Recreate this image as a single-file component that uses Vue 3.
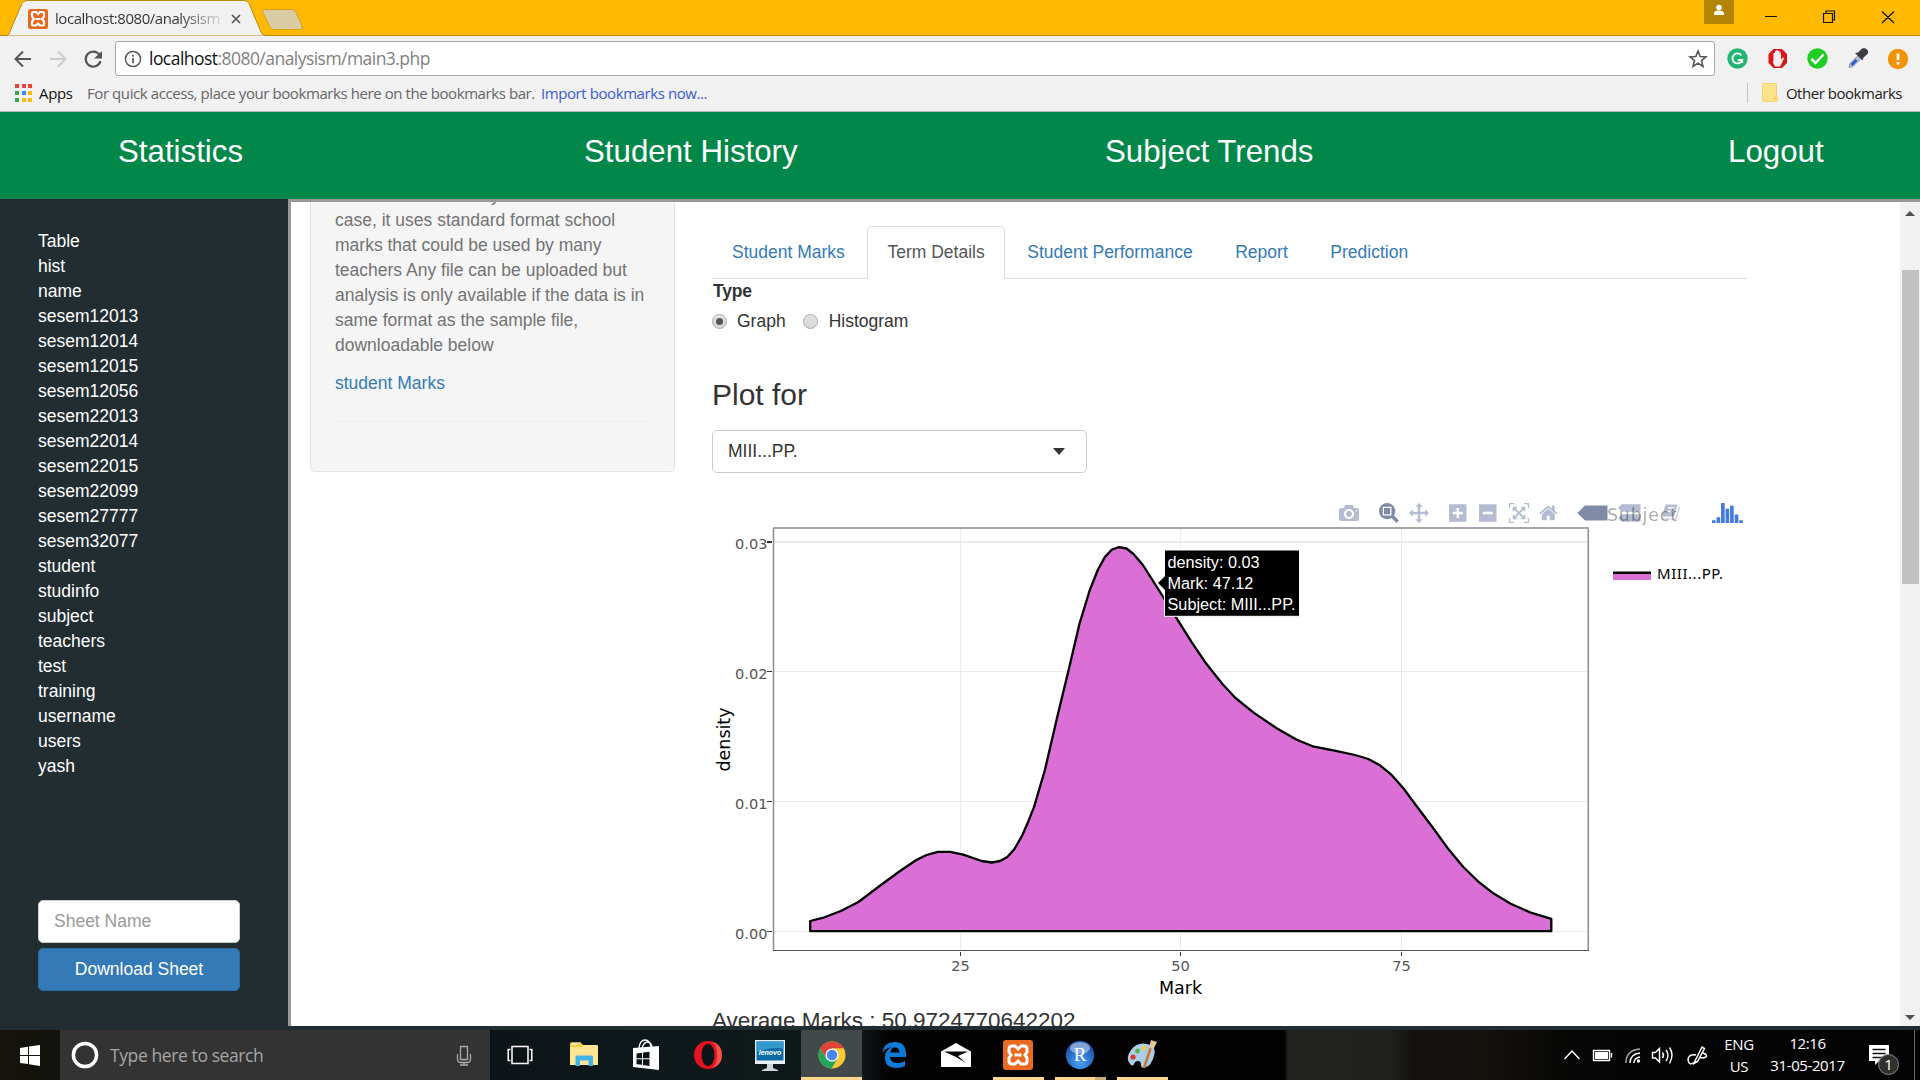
<script setup>
const tables = [
  'Table', 'hist', 'name', 'sesem12013', 'sesem12014', 'sesem12015', 'sesem12056',
  'sesem22013', 'sesem22014', 'sesem22015', 'sesem22099', 'sesem27777', 'sesem32077',
  'student', 'studinfo', 'subject', 'teachers', 'test', 'training', 'username', 'users', 'yash'
]
const tabs = ['Student Marks', 'Term Details', 'Student Performance', 'Report', 'Prediction']
const activeTab = 'Term Details'
const helpLines = [
  'case, it uses standard format school', 'marks that could be used by many',
  'teachers Any file can be uploaded but', 'analysis is only available if the data is in',
  'same format as the sample file,', 'downloadable below'
]
const appDots = ['#ea4335', '#ea4335', '#ea4335', '#34a853', '#4285f4', '#fbbc05', '#34a853', '#fbbc05', '#fbbc05']

const curve = [
  [810.2, 921], [824.5, 917.3], [840.8, 911], [858.4, 902], [879.6, 886], [900, 871], [916.3, 860],
  [926.5, 855], [938, 851.8], [950, 851.8], [963.3, 854.7], [981.6, 861], [991.8, 862.5], [1000, 861],
  [1007.3, 857], [1014.3, 849.3], [1022.4, 835], [1028.6, 820.7], [1033.9, 807.3], [1044.9, 770],
  [1057, 718], [1069.4, 666.7], [1079.6, 623.3], [1089.8, 590], [1098, 569.5], [1105, 556.9],
  [1112, 549.5], [1119, 547.2], [1126.5, 548.5], [1133.5, 554], [1142.9, 565], [1155, 584],
  [1164.5, 599], [1176.7, 618.3], [1191.8, 642.3], [1206, 663.3], [1222.4, 684], [1235.5, 698],
  [1253.3, 712.4], [1276.7, 728.3], [1296.7, 739.7], [1312.7, 746.3], [1333.3, 750.3], [1355, 755],
  [1368.3, 759], [1380, 765.3], [1391, 774.3], [1404, 789], [1415, 804], [1433.3, 828.3],
  [1447.3, 847.7], [1463.3, 867], [1478, 881.3], [1493.3, 893.3], [1510.7, 903.7], [1530, 912.3],
  [1551.3, 918.9]
]
const area = 'M' + curve.map(p => p.join(' ')).join('L') + 'L1551.3 931.2L810.2 931.2Z'
const yTicks = [{ v: '0.03', y: 542, w: 2 }, { v: '0.02', y: 671.5, w: 1 }, { v: '0.01', y: 801.5, w: 1 }, { v: '0.00', y: 931.5, w: 1 }]
const xTicks = [{ v: '25', x: 960.5 }, { v: '50', x: 1180.5 }, { v: '75', x: 1401.5 }]

const modebar = [
  { x: 1339, on: false, d: 'm500 450c-83 0-150-67-150-150 0-83 67-150 150-150 83 0 150 67 150 150 0 83-67 150-150 150z m400 150h-120c-16 0-34 13-39 29l-31 93c-6 15-23 28-40 28h-340c-16 0-34-13-39-28l-31-94c-6-15-23-28-40-28h-120c-55 0-100-45-100-100v-450c0-55 45-100 100-100h800c55 0 100 45 100 100v450c0 55-45 100-100 100z m-400-550c-138 0-250 112-250 250 0 138 112 250 250 250 138 0 250-112 250-250 0-138-112-250-250-250z m365 380c-19 0-35 16-35 35 0 19 16 35 35 35 19 0 35-16 35-35 0-19-16-35-35-35z' },
  { x: 1379, on: true, d: 'm1000-25l-250 251c40 63 63 138 63 218 0 224-182 406-407 406-224 0-406-182-406-406s183-406 407-406c80 0 155 22 218 62l250-250 125 125z m-812 250l0 438 437 0 0-438-437 0z m62 375l313 0 0-312-313 0 0 312z' },
  { x: 1409, on: false, d: 'm1000 350l-187 188 0-125-250 0 0 250 125 0-188 187-187-187 125 0 0-250-250 0 0 125-188-188 186-187 0 125 252 0 0-250-125 0 187-188 188 188-125 0 0 250 250 0 0-126 187 188z' },
  { x: 1449, on: false, d: 'm1 787l0-875 875 0 0 875-875 0z m687-500l-187 0 0-187-125 0 0 187-188 0 0 125 188 0 0 187 125 0 0-187 187 0 0-125z' },
  { x: 1479, on: false, d: 'm0 788l0-876 875 0 0 876-875 0z m688-500l-500 0 0 125 500 0 0-125z' },
  { x: 1509, on: false, d: 'm250 850l-187 0-63 0 0-62 0-188 63 0 0 188 187 0 0 62z m688 0l-188 0 0-62 188 0 0-188 62 0 0 188 0 62-62 0z m-875-938l0 188-63 0 0-188 0-62 63 0 187 0 0 62-187 0z m875 188l0-188-188 0 0-62 188 0 62 0 0 62 0 188-62 0z m-125 188l-1 0-93-94-156 156 156 156 92-93 2 0 0 250-250 0 0-2 93-92-156-156-156 156 94 92 0 2-250 0 0-250 0 0 93 93 157-156-157-156-93 94 0 0 0-250 250 0 0 0-94 93 156 157 156-157-93-93 0 0 250 0 0 250z' },
  { x: 1539, on: false, d: 'm786 296v-267q0-15-11-26t-25-10h-214v214h-143v-214h-214q-15 0-25 10t-11 26v267q0 1 0 2t0 2l321 264 321-264q1-1 1-4z m124 39l-34-41q-5-5-12-6h-2q-7 0-12 3l-386 322-386-322q-7-4-13-4-7 2-12 7l-35 41q-4 5-3 13t6 12l401 334q18 15 42 15t43-15l136-114v109q0 8 5 13t13 5h107q8 0 13-5t5-13v-227l122-102q5-5 6-12t-4-13z' },
  { x: 1577.5, on: true, d: 'm375 725l0 0-375-375 375-374 0-1 1125 0 0 750-1125 0z' },
  { x: 1618, on: false, d: 'm187 786l0 2-187-188 188-187 0 0 937 0 0 373-938 0z m0-499l0 1-187-188 188-188 0 0 937 0 0 376-938-1z' }
]
const logo = 'm0-10h182v-140h-182v140z m228 146h183v-286h-183v286z m225 714h182v-1000h-182v1000z m225-285h182v-715h-182v715z m225 142h183v-857h-183v857z m231-428h182v-429h-182v429z m225-291h183v-138h-183v138z'
</script>

<template>
  <div class="screen">
    <header class="titlebar">
      <svg class="tabshape" width="320" height="36" viewBox="0 0 320 36">
        <path d="M0 35.5H6C9 35.5 9.500 33 10.500 30L22 3.500Q23.500 .5 27 .5H244Q247.500 .5 249 3.500L261 32Q262.500 35.500 266 35.500H320" fill="#f1f1f1" stroke="#bd8a10" />
        <path d="M264.500 9.500H292Q295 9.500 296 12L302.500 27Q303 29.500 300 29.500H274Q271 29.500 270 27L262.500 12Q262 9.500 264.500 9.500Z" fill="#dacba4" stroke="#d9a013" />
        <rect x="28" y="9" width="20" height="20" rx="2.500" fill="#e8691d" />
        <path d="M32 13.500q0-1.500 1.500-1.500h2.500l2 2 2-2h2.500q1.500 0 1.500 1.500v3l-2 2.500 2 2.500v2.500q0 1.500-1.500 1.500h-2.500l-2-2-2 2h-2.500q-1.500 0-1.500-1.500v-2.500l2-2.500-2-2.500z" fill="none" stroke="#fff" stroke-width="2.200" />
        <path d="M35.500 19h5" stroke="#fff" stroke-width="2" />
        <path d="M232 15l8 8m0-8l-8 8" stroke="#555" stroke-width="1.700" />
      </svg>
      <span class="tabtitle">localhost:8080/analysism</span>
      <div class="winctl">
        <span class="user"><svg width="30" height="24" viewBox="0 0 30 24"><circle cx="15" cy="7.500" r="2.800" fill="#fff" /><path d="M10 15v-1.500q0-3 5-3t5 3V15z" fill="#fff" /></svg></span>
        <svg width="176" height="35" viewBox="1744 0 176 35" fill="none" stroke="#111" stroke-width="1.200">
          <path d="M1765 16.500h12M1823.500 13.500h9v9h-9zM1826 13v-2h8.500v9h-2M1882 11.500l12 11.500m0-11.500l-12 11.500" />
        </svg>
      </div>
    </header>

    <div class="toolbar">
      <svg width="115" height="46" viewBox="0 36 115 46" fill="none" stroke-width="2">
        <path d="M31 59H16m7-7.500l-7.500 7.500 7.500 7.500" stroke="#555" />
        <path d="M50 59h15m-7-7.500l7.500 7.500-7.500 7.500" stroke="#ccc" />
        <path d="M99.500 55A7.500 7.500 0 1 0 100.500 61" stroke="#555" stroke-width="2.200" />
        <path d="M102 51v7.500h-8z" fill="#555" />
      </svg>
      <div class="omnibox">
        <svg width="18" height="18" viewBox="0 0 18 18"><circle cx="9" cy="9" r="7.600" fill="none" stroke="#5a5a5a" stroke-width="1.500" /><path d="M9 8v5.200M9 4.700v2" stroke="#5a5a5a" stroke-width="1.700" /></svg>
        <span class="url"><b>localhost</b>:8080/analysism/main3.php</span>
        <svg class="star" width="20" height="20" viewBox="0 0 20 20"><path d="M10 2l2.200 5.500 5.800.4-4.500 3.700 1.500 5.800-5-3.200-5 3.200 1.500-5.800L2 7.900l5.800-.4z" fill="none" stroke="#555" stroke-width="1.600" /></svg>
      </div>
      <svg width="205" height="46" viewBox="1715 36 205 46">
        <circle cx="1737.500" cy="58.500" r="10.200" fill="#23b574" />
        <path d="M1741.500 55.500a5 5 0 1 0 .7 4.500h-4.500m4.500 0v3" fill="none" stroke="#fff" stroke-width="1.800" />
        <path d="M1773.500 49h8.500l5 5v9l-5 5h-8.500l-5-5v-9z" fill="#dc1518" />
        <path d="M1773.500 59v-6h1.500v-2h1.500v-1h1.500v1h1.500v1.500h1.500v7l1.500-2 1.500.5-2.500 6-1.500 2.500h-5l-2-4z" fill="#f4eeee" />
        <circle cx="1817.500" cy="58.500" r="10.200" fill="#1fce25" />
        <path d="M1811.500 59l4 4 8-8.500" fill="none" stroke="#fff" stroke-width="2.500" />
        <path d="M1849 67.500l1-4 8-8 3 3-8 8z" fill="#a7c0e8" stroke="#999" /><path d="M1851.500 65l5-5" stroke="#2d55cf" stroke-width="2.500" />
        <path d="M1855 53l3-.5 4-4q3-1 5 1t.5 4.500l-4 3.500-1 3z" fill="#3c3c40" />
        <circle cx="1898" cy="59" r="10.200" fill="#f29305" />
        <path d="M1898 53.500v6.500m0 2v2.500" stroke="#fff" stroke-width="2.700" />
      </svg>
    </div>

    <div class="bookmarks">
      <div class="dots"><i v-for="(c, i) in appDots" :key="i" :style="{ background: c }"></i></div>
      <span class="apps">Apps</span>
      <span class="hint">For quick access, place your bookmarks here on the bookmarks bar.</span>
      <span class="import">Import bookmarks now...</span>
      <div class="other">
        <svg width="16" height="19" viewBox="0 0 16 19"><path d="M1.500.5h12q1 0 1 1V13l1 1v3.500l-2 1h-12q-1 0-1-1v-16q0-1 1-1z" fill="#ffe38c" stroke="#f5d06c" /><path d="M12.500 17v-3h2.500" fill="none" stroke="#efc64f" /></svg>
        <span>Other bookmarks</span>
      </div>
    </div>

    <nav class="topnav">
      <a>Statistics</a><a>Student History</a><a>Subject Trends</a><a>Logout</a>
    </nav>

    <div class="body">
      <aside class="sidebar">
        <div v-for="t in tables" :key="t" class="row">{{ t }}</div>
        <div class="field">Sheet Name</div>
        <div class="btn">Download Sheet</div>
      </aside>
      <main class="frame">
        <section class="well">
          <div class="cut">y</div>
          <div v-for="l in helpLines" :key="l">{{ l }}</div>
          <a class="dl">student Marks</a>
          <hr />
        </section>
        <section class="content">
          <div class="tabs">
            <a v-for="t in tabs" :key="t" :class="{ active: t === activeTab }">{{ t }}</a>
          </div>
          <div class="type">Type</div>
          <div class="radios">
            <i class="radio on"></i><span>Graph</span><i class="radio second"></i><span>Histogram</span>
          </div>
          <h3>Plot for</h3>
          <div class="select"><span>MIII...PP.</span><i></i></div>
          <svg class="plot" width="1080" height="532" viewBox="712 473 1080 532">
            <g stroke="#ebebeb">
              <path v-for="t in yTicks" :key="t.v" :d="`M774 ${t.y}H1588`" :stroke-width="t.w" />
              <path v-for="t in xTicks" :key="t.v" :d="`M${t.x} 528V950`" />
            </g>
            <path :d="area" fill="#da70d6" stroke="#000" stroke-width="2.300" stroke-linejoin="round" />
            <path d="M773.500 528V950.500M1588.300 528V950.500" stroke="#8c8c8c" stroke-width="1.500" />
            <path d="M773 528H1589" stroke="#a6a6a6" stroke-width="2" />
            <path d="M773 950.500H1589" stroke="#555" />
            <g stroke="#333">
              <path v-for="t in yTicks" :key="t.v" :d="`M767 ${t.y}H772`" :stroke-width="t.w" />
              <path v-for="t in xTicks" :key="t.v" :d="`M${t.x} 952V956`" />
            </g>
            <g class="ticks">
              <text v-for="t in yTicks" :key="t.v" x="767.500" :y="t.y + 7" text-anchor="end">{{ t.v }}</text>
              <text v-for="t in xTicks" :key="t.v" :x="t.x" y="971" text-anchor="middle">{{ t.v }}</text>
            </g>
            <g class="axis">
              <text x="1180.500" y="993.500" text-anchor="middle">Mark</text>
              <text transform="translate(730 739.500) rotate(-90)" text-anchor="middle">density</text>
            </g>
            <g>
              <path v-for="b in modebar" :key="b.x" :d="b.d" :transform="`matrix(.02 0 0 -.02 ${b.x} 520)`" :fill="b.on ? '#808ba5' : '#b4bcd1'" />
              <path d="M1665.500 504.500h12l-3.500 12h-12z" fill="#b4bcd1" />
              <path d="M1668 508h6.500M1667 511.500h6.500" stroke="#fff" stroke-width="1.600" />
              <path d="M1679.500 507l-3.500 12h-14" fill="none" stroke="#c3cadb" stroke-width="1.200" />
              <path :d="logo" transform="matrix(.02 0 0 -.02 1712 520)" fill="#447adb" />
            </g>
            <text class="ltitle" x="1607" y="521" textLength="70">Subject</text>
            <rect x="1613" y="573" width="38" height="7" fill="#da70d6" />
            <rect x="1613" y="571.500" width="38" height="2.500" fill="#000" />
            <text class="litem" x="1657" y="578.700" textLength="66">MIII...PP.</text>
            <path d="M1157.500 583l7-7V550h135v66.300h-135V590z" fill="#000" stroke="#fff" />
            <g class="tip">
              <text x="1167.500" y="567.700">density: 0.03</text>
              <text x="1167.500" y="589">Mark: 47.12</text>
              <text x="1167.500" y="610">Subject: MIII...PP.</text>
            </g>
          </svg>
          <div class="avg">Average Marks : 50.9724770642202</div>
        </section>
        <div class="scroll">
          <i class="up"></i><div class="thumb"></div><i class="down"></i>
        </div>
      </main>
    </div>

    <footer class="taskbar">
      <div class="start"><svg width="20" height="21" viewBox="0 0 20 21" fill="#fff"><path d="M0 3l8-1.200V9.900H0zM9 1.600L20 0v9.900H9zM0 10.900h8v8L0 17.900zM9 10.900h11V21L9 19.200z" /></svg></div>
      <div class="search">
        <svg width="28" height="28" viewBox="0 0 28 28"><circle cx="14" cy="14" r="11.600" fill="none" stroke="#fff" stroke-width="3.500" /></svg>
        <span>Type here to search</span>
        <svg class="mic" width="16" height="21" viewBox="0 0 16 21" fill="none" stroke="#aaa" stroke-width="1.300"><path d="M4.500 1.500h7v13h-7zM1.500 9v5q0 3.500 3.500 3.500h6q3.500 0 3.500-3.500V9M8 17.500V20M4 20h8" /></svg>
      </div>
      <div class="slot first"><svg width="26" height="20" viewBox="0 0 26 20" fill="none" stroke="#fff" stroke-width="1.500"><path d="M5 1.500h16v17H5zM3.500 4.500H1.200v11h2.300M22.500 4.500h2.300v11h-2.300" /></svg></div>
      <div class="slot"><svg width="30" height="26" viewBox="0 0 30 26"><path d="M1 2q0-1.500 1.500-1.500h9L14 3H28q1 0 1 1v19H1z" fill="#ffe596" /><path d="M1 2q0-1.500 1.500-1.500h9L14 5H1z" fill="#ffcb3d" /><path d="M3 2h6" stroke="#fff" stroke-width="1.500" /><path d="M6.500 24V15q0-1.500 1.500-1.500h14.500q1.500 0 1.500 1.500v9h-4.500v-5.500h-8.500V24z" fill="#3fb4e6" /></svg></div>
      <div class="slot"><svg width="28" height="32" viewBox="0 0 28 32"><path d="M7 9Q8 1 13 1t6 7M10 9Q12 3 15.500 3T20 8" fill="none" stroke="#fff" stroke-width="1.300" /><path d="M1 9l26-2v24l-26-3z" fill="#fff" /><path d="M4.500 14.500l5.500-.8v5.500H4.500zM11 13.500l6.500-.8v6.500H11zM4.500 20.300H10v5.500l-5.500-.6zM11 20.300h6.500V27L11 26z" fill="#0c1417" /></svg></div>
      <div class="slot"><svg width="30" height="30" viewBox="0 0 30 30"><ellipse cx="15" cy="15" rx="14" ry="14" fill="#e5131f" /><path d="M19 1.600Q29 5 29 15T19 28.400Q24 24 24 15T19 1.600z" fill="#f6504f" /><ellipse cx="15" cy="15" rx="6.500" ry="11.300" fill="#0c1417" /></svg></div>
      <div class="slot"><svg width="32" height="32" viewBox="0 0 32 32"><path d="M1 1h30v24H1z" fill="#e8edf2" /><path d="M2.500 2.500h27v19h-27z" fill="#0d6ba8" /><path d="M2.500 2.500h27v7q-13-2-27 4z" fill="#3399cc" /><path d="M13 25h6v4l5 2v1H8v-1l5-2z" fill="#cdd3d8" /><text x="16" y="15.500" text-anchor="middle" class="lenovo">lenovo</text></svg></div>
      <div class="slot chrome"><svg width="28" height="30" viewBox="0 0 28 28"><circle cx="14" cy="14" r="13.500" fill="#fcc934" /><path d="M2.300 7.200A13.500 13.500 0 0 1 25.700 7.200H14L8.200 17.400z" fill="#dd4336" /><path d="M2.300 7.200A13.500 13.500 0 0 0 13.500 27.500L19.800 17.500 14 20.700 8.200 17.400z" fill="#22a55a" /><circle cx="14" cy="14" r="6.600" fill="#f3f3f3" /><circle cx="14" cy="14" r="5.200" fill="#4787f2" /></svg></div>
      <div class="slot"><svg width="26" height="28" viewBox="0 0 26 28"><path d="M1 12Q3 1 13.500 1 25 1 25 13v3H9q.5 6 8 6 4 0 7-2v5q-3.500 2-8.500 2Q4 27 4 16.500 4 9 11 6 4 7 1 12zM9.500 11.500h9Q18 6.500 14 6.500T9.500 11.500z" fill="#0f7bd9" fill-rule="evenodd" /></svg></div>
      <div class="slot"><svg width="32" height="26" viewBox="0 0 32 26"><path d="M1 9.500L16 1l15 8.500V25H1z" fill="#fff" /><path d="M4 9.500h24L18 14l8 7-10-6z" fill="#050505" /></svg></div>
      <div class="slot run"><svg width="30" height="30" viewBox="0 0 30 30"><rect width="30" height="30" rx="3" fill="#ea6b20" /><path d="M6 9q0-3 3-3h3l3 3 3-3h3q3 0 3 3v3l-2 3 2 3v3q0 3-3 3h-3l-3-3-3 3H9q-3 0-3-3v-3l2-3-2-3z" fill="none" stroke="#fff" stroke-width="3" /><path d="M11.500 15h7" stroke="#fff" stroke-width="3" /></svg></div>
      <div class="slot run split"><svg width="30" height="30" viewBox="0 0 30 30"><defs><radialGradient id="rg" cx=".5" cy=".75" r=".7"><stop offset="0" stop-color="#4ba3ff" /><stop offset="1" stop-color="#174a9e" /></radialGradient></defs><circle cx="15" cy="15" r="14.200" fill="url(#rg)" /><ellipse cx="15" cy="8" rx="10" ry="6" fill="#b8cdec" opacity=".65" /><text x="15" y="21" text-anchor="middle" class="rletter">R</text></svg></div>
      <div class="slot run"><svg width="32" height="30" viewBox="0 0 32 30"><path d="M4 24Q-1 18 5 10t16-6 7 12-8 11q-5 2-5-2t-3-4-4 3-4 0z" fill="#a9cfe8" /><circle cx="7" cy="17" r="2.600" fill="#d8382f" /><circle cx="11.500" cy="11" r="2.400" fill="#5bb544" /><circle cx="18" cy="8" r="2.400" fill="#f0d24a" /><path d="M18 28L25 7" stroke="#c9762d" stroke-width="2.500" /><path d="M23 8l2-8 6 2-3.500 7z" fill="#e5c695" /></svg></div>
      <div class="tray">
        <svg width="154" height="50" viewBox="1560 1030 154 50" fill="none" stroke="#fff" stroke-width="1.400">
          <path d="M1564.500 1059l7.500-8 7.500 8" />
          <path d="M1593.500 1050.500h16v10h-16zM1611.500 1053v4.500" /><path d="M1595 1052h13v7h-13z" fill="#fff" stroke="none" />
          <g stroke="#aaa"><path d="M1626 1063q0-13 14-14" /><path d="M1630 1063q0-9 10-10" stroke="#fff" /><path d="M1634 1063q0-5 6-6" stroke="#fff" /></g><circle cx="1638.500" cy="1061" r="1.700" fill="#fff" stroke="none" />
          <path d="M1652.500 1052.500h3l4-4v13.500l-4-4h-3zM1662.500 1052.500q2 3 0 5.500M1666 1050q4 5 0 11M1669.500 1047.500q5 7 0 16" />
          <path d="M1695 1061l7-14 2.500 1.500-7 13-3.500 2zM1696 1055q-8-1-8 5 1 6 6 2.500M1703 1053q5 2 3 4-3 1.500-6 .500" stroke-width="1.500" />
        </svg>
        <div class="two lang"><span>ENG</span><span>US</span></div>
        <div class="two clock"><span>12:16</span><span>31-05-2017</span></div>
        <svg width="62" height="50" viewBox="1858 1030 62 50"><path d="M1869 1045h20v16h-10l-4 4v-4h-6z" fill="#fff" /><path d="M1872.500 1049.500h13M1872.500 1053.500h13M1872.500 1057.500h10" stroke="#111" stroke-width="1.300" /><circle cx="1888.500" cy="1064.500" r="10" fill="#303030" stroke="#8c8c8c" /><text x="1888.500" y="1070" text-anchor="middle" class="badge">1</text><path d="M1914.500 1030v50" stroke="#666" /></svg>
      </div>
    </footer>
  </div>
</template>

<style>
body { background: #222d32; overflow: hidden; }
</style>

<style scoped>
* { box-sizing: border-box; }
.screen { width: 1920px; height: 1080px; display: flex; flex-direction: column; overflow: hidden; background: #222d32; font-family: "Liberation Sans", Arial, sans-serif; font-size: 17.5px; line-height: 25px; white-space: nowrap; }
.titlebar { height: 36px; background: #ffb900; border-bottom: 1px solid #bd8a10; display: flex; position: relative; flex: none; }
.tabshape { position: absolute; left: 0; top: 0; }
.tabtitle { position: relative; margin-left: 55px; width: 166px; overflow: hidden; font: 15px/37px "Open Sans", sans-serif; letter-spacing: -.45px; color: transparent; background: linear-gradient(90deg, #333 75%, #33333320 100%); background-clip: text; -webkit-background-clip: text; height: 36px; }
.winctl { margin-left: auto; display: flex; }
.user { width: 30px; height: 24px; background: #b38304; margin-right: 10px; }
.toolbar { height: 46px; background: #f1f1f1; display: flex; flex: none; }
.omnibox { width: 1600px; height: 35px; margin-top: 5px; background: #fff; border: 1px solid #a8a8a8; border-radius: 3px; display: flex; align-items: center; padding: 0 6px 0 8px; }
.url { font: 17.5px/32px "Open Sans", sans-serif; color: #808080; margin: -2px 0 0 7px; letter-spacing: -.54px; }
.url b { font-weight: 400; color: #111; }
.star { margin-left: auto; }
.bookmarks { height: 30px; background: #f1f1f1; border-bottom: 1px solid #b6b6b6; display: flex; align-items: center; font: 15px/20px "Open Sans", sans-serif; flex: none; padding-bottom: 8px; }
.dots { display: grid; grid-template-columns: 4px 4px 4px; gap: 3px 2.500px; margin-left: 15px; width: 24px; }
.dots i { height: 4px; }
.apps { width: 48px; letter-spacing: -.35px; color: #111; }
.hint { width: 454px; color: #666; letter-spacing: -.42px; }
.import { color: #3b5bd0; letter-spacing: -.42px; }
.other { margin-left: auto; border-left: 1px solid #c4c4c4; height: 20px; display: flex; align-items: center; padding: 0 18px 0 14px; gap: 8px; color: #222; letter-spacing: -.47px; }
.topnav { height: 87px; background: #008749; color: #fff; display: flex; flex: none; font-size: 31.250px; line-height: 36px; padding: 22px 0 0; }
.topnav a { flex: none; }
.topnav a:nth-child(1) { width: 466px; margin-left: 118px; }
.topnav a:nth-child(2) { width: 521px; }
.topnav a:nth-child(3) { width: 623px; }
.body { height: 831px; display: flex; flex: none; }
.sidebar { width: 288px; height: 831px; background: #222d32; color: #fff; padding: 30px 48px 39px 38px; display: flex; flex-direction: column; }
.field { margin-top: auto; height: 43px; background: #fff; border: 1px solid #ccc; border-radius: 5px; color: #999; padding: 8px 15px; }
.btn { margin-top: 5px; height: 43px; background: #337ab7; border: 1px solid #2e6da4; border-radius: 5px; text-align: center; line-height: 40px; }
.frame { width: 1632px; height: 827px; border-left: 3px solid #999; border-top: 3px solid #999; background: #fff; display: flex; overflow: hidden; }
.well { margin-left: 19px; width: 365px; height: 270px; flex: none; background: #f5f5f5; border: 1px solid #e3e3e3; border-top: 0; border-radius: 0 0 5px 5px; padding: 0 24px; color: #737373; }
.cut { margin: -19px 0 0 156px; }
.dl { display: block; margin-top: 13px; color: #337ab7; }
hr { border: 0; border-top: 1px solid #eee; margin: 25px 0 0; }
.content { margin-left: 37px; width: 1035px; flex: none; color: #333; padding-top: 24px; }
.tabs { display: flex; border-bottom: 1px solid #ddd; height: 53px; color: #337ab7; }
.tabs a { height: 53px; padding: 12.500px 19px; border: 1px solid transparent; margin-right: 2.600px; }
.tabs .active { color: #555; background: #fff; border-color: #ddd #ddd #fff; border-radius: 5px 5px 0 0; }
.type { font-weight: 700; line-height: 24px; padding-left: 1px; letter-spacing: -.2px; }
.radios { display: flex; align-items: center; height: 25px; margin-top: 6px; }
.radio { width: 15px; height: 15px; border: 1px solid #aaa; border-radius: 50%; background: linear-gradient(#e4e4e4, #d6d6d6); margin-right: 10px; display: flex; align-items: center; justify-content: center; }
.radio.second { margin-left: 17px; margin-right: 11px; }
.radio.on::after { content: ""; width: 7px; height: 7px; border-radius: 50%; background: #555; }
h3 { font-size: 30px; line-height: 33px; font-weight: 400; margin: 44px 0 0; }
.select { margin-top: 19px; width: 375px; height: 43px; border: 1px solid #ccc; border-radius: 5px; display: flex; justify-content: space-between; align-items: center; padding: 0 21px 1px 15px; }
.select i { border: 6.500px solid transparent; border-top: 7px solid #333; border-bottom: 0; }
.plot { display: block; }
.ticks { font: 14.600px "DejaVu Sans", sans-serif; fill: #555; }
.axis { font: 17.500px "DejaVu Sans", sans-serif; fill: #000; }
.ltitle { font: 17.500px "DejaVu Sans", sans-serif; fill: #000; opacity: .33; }
.litem { font: 15px "Noto Sans", sans-serif; fill: #000; }
.tip { font: 16.250px "Liberation Sans", Arial, sans-serif; fill: #fff; }
.avg { font-size: 22.500px; line-height: 25px; margin-top: 3px; }
.scroll { margin-left: auto; width: 20px; background: #f1f1f1; display: flex; flex-direction: column; align-items: center; }
.thumb { width: 17px; height: 314px; background: #c1c1c1; margin-top: 53px; }
.up { border: 5px solid transparent; border-bottom: 5px solid #505050; border-top: 0; margin-top: 9px; margin-bottom: 1px; }
.down { border: 5px solid transparent; border-top: 5px solid #505050; border-bottom: 0; margin: auto 0 6px; }
.taskbar { height: 50px; flex: none; display: flex; background: linear-gradient(90deg, #14130c 0, #0c1417 490px, #0f191b 700px, #101819 860px, #020202 890px, #020202 1284px, #22231f 1288px, #20211d 1390px, #13120e 1412px, #13110c 1490px, #050505 1580px, #030303 100%); }
.start { width: 60px; padding: 14.500px 0 0 20px; }
.search { width: 430px; background: #333; display: flex; align-items: center; padding-left: 11px; color: #a6a6a6; font: 17.500px/50px "Open Sans", sans-serif; }
.search span { margin-left: 11px; letter-spacing: -.4px; }
.mic { margin: 0 18px 0 auto; }
.slot { width: 62px; display: flex; align-items: center; justify-content: center; position: relative; }
.first { width: 60px; margin-right: 3px; }
.chrome { background: #42494b; box-shadow: inset 0 -3px #ffd68c; width: 61px; margin-right: 1px; }
.run::after { content: ""; position: absolute; left: 6px; right: 5px; bottom: 0; height: 3px; background: #ffd68c; }
.split::after { background: linear-gradient(90deg, #ffd68c 79%, #c9ab78 79%); }
.lenovo { font: italic 700 7px "Liberation Sans", sans-serif; fill: #fff; }
.rletter { font: 19px "Liberation Serif", serif; fill: #fff; }
.badge { font: 15px "Open Sans", sans-serif; fill: #fff; }
.tray { margin-left: auto; display: flex; color: #fff; font: 15px/22px "Open Sans", sans-serif; }
.two { display: flex; flex-direction: column; align-items: center; padding-top: 2px; letter-spacing: -.4px; }
.lang { width: 50px; padding-top: 3px; }
.clock { width: 94px; padding-right: 7px; }
</style>
